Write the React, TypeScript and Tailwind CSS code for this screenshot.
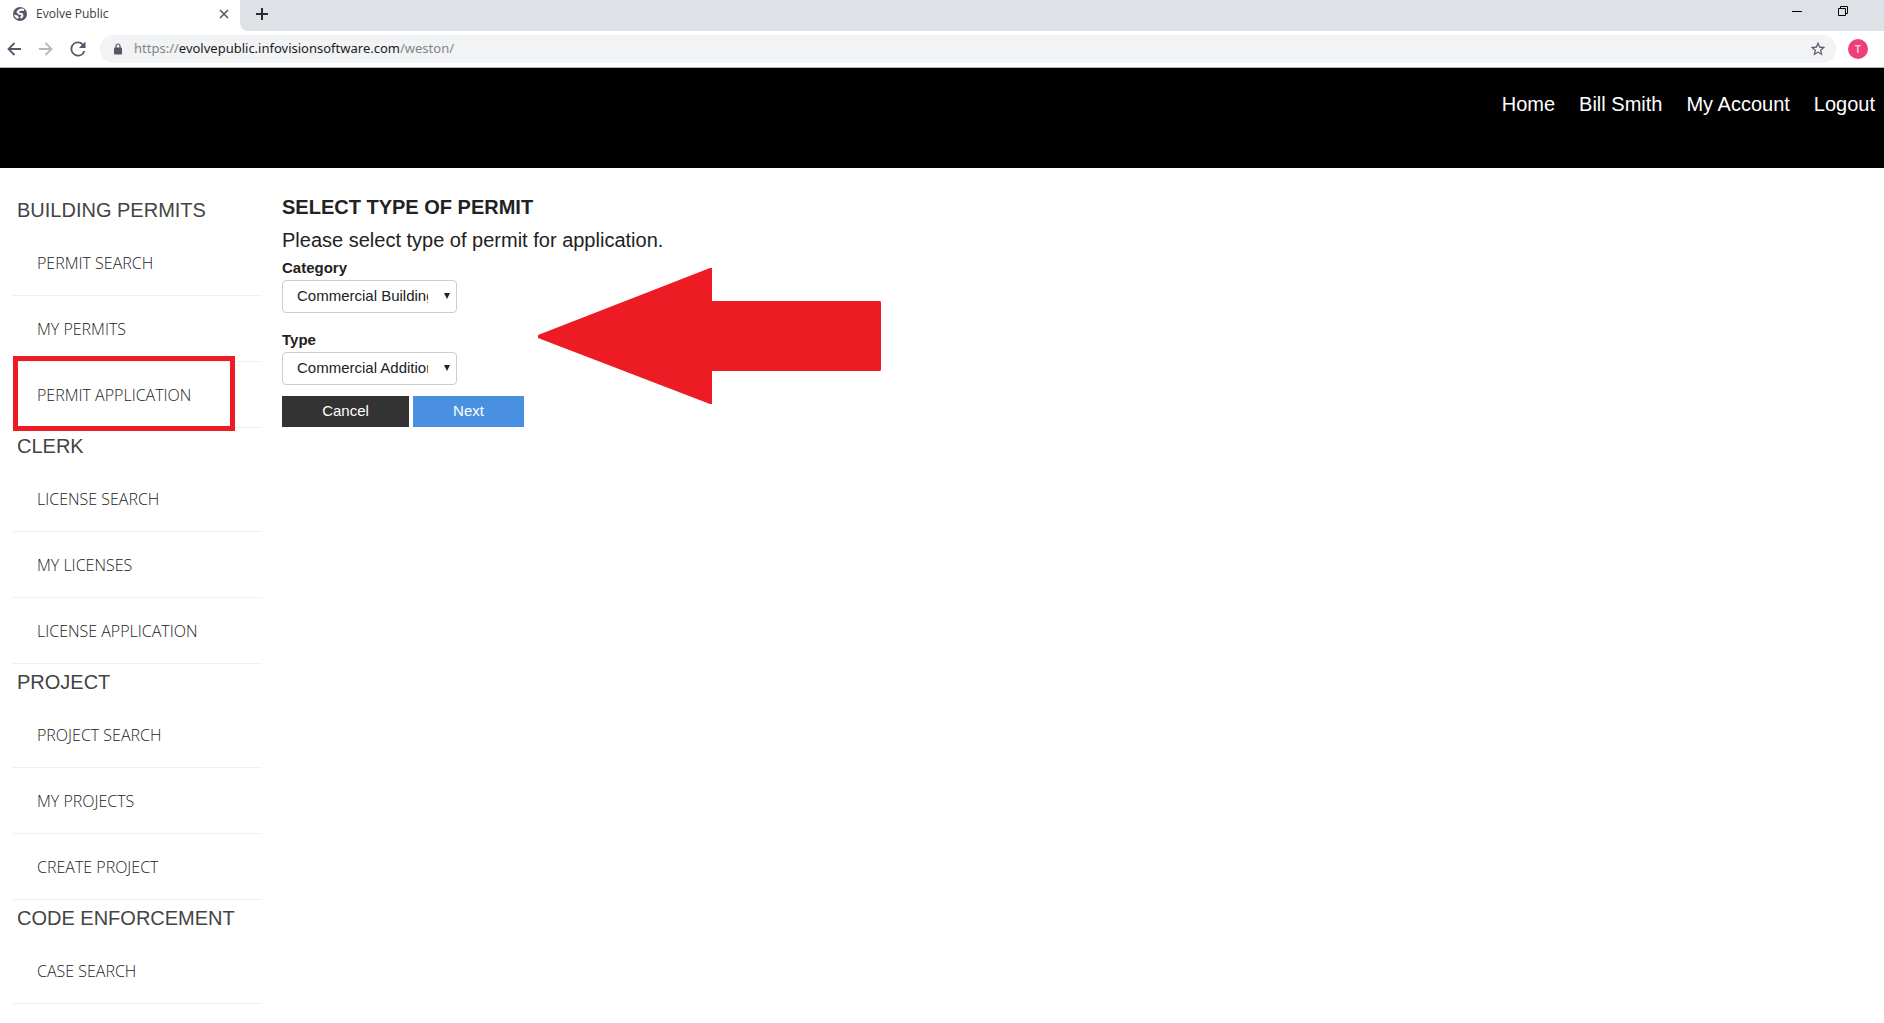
import { useState } from 'react'

type NavItem = { label: string; highlighted?: boolean }

const MENU: { title: string; items: NavItem[] }[] = [
  {
    title: 'BUILDING PERMITS',
    items: [
      { label: 'PERMIT SEARCH' },
      { label: 'MY PERMITS' },
      { label: 'PERMIT APPLICATION', highlighted: true },
    ],
  },
  {
    title: 'CLERK',
    items: [{ label: 'LICENSE SEARCH' }, { label: 'MY LICENSES' }, { label: 'LICENSE APPLICATION' }],
  },
  {
    title: 'PROJECT',
    items: [{ label: 'PROJECT SEARCH' }, { label: 'MY PROJECTS' }, { label: 'CREATE PROJECT' }],
  },
  {
    title: 'CODE ENFORCEMENT',
    items: [{ label: 'CASE SEARCH' }],
  },
]

const ACCOUNT_LINKS = ['Home', 'Bill Smith', 'My Account', 'Logout']

export default function App() {
  return (
    <div className="h-screen flex flex-col overflow-hidden bg-white font-['Liberation_Sans',Arial,sans-serif] text-[#222]">
      <TabStrip />
      <Toolbar />
      <header className="h-[100px] shrink-0 bg-black px-[9px] pt-6">
        <nav className="flex justify-end gap-6 text-xl leading-6 text-white">
          {ACCOUNT_LINKS.map((label) => (
            <a key={label} href="#">
              {label}
            </a>
          ))}
        </nav>
      </header>
      <div className="flex flex-1 min-h-0">
        <Sidebar />
        <PermitForm />
      </div>
    </div>
  )
}

function TabStrip() {
  return (
    <div className="flex h-[31px] shrink-0 bg-white font-['Open_Sans',sans-serif]">
      <div className="flex w-60 items-center pl-3 pr-2.5 pb-1">
        <svg width="16" height="16" viewBox="0 0 16 16" fill="none" className="mr-2">
          <circle cx="8" cy="8" r="7" fill="#5a5468" />
          <path
            d="M12 4L9.500 3.500 7 4.500 5.500 6 7 7.500 10 8.200 10.500 10 8.500 12"
            stroke="#fff"
            strokeWidth="2"
            strokeLinejoin="round"
          />
          <path d="M2 8.500l3.500 1 1.500 2-1.500 1.500A6 6 0 0 1 2 8.500z" fill="#fff" />
        </svg>
        <span className="flex-1 text-xs text-[#3c4043]">Evolve Public</span>
        <button aria-label="Close tab">
          <svg width="12" height="12" viewBox="0 0 12 12" stroke="#5a5468" strokeWidth="1.6">
            <path d="M2 2l8 8M10 2l-8 8" />
          </svg>
        </button>
      </div>
      <div className="flex flex-1 rounded-bl-lg bg-[#dee1e6]">
        <button aria-label="New tab" className="ml-4 mb-[3px]">
          <svg width="12" height="12" viewBox="0 0 12 12" stroke="#2b2b30" strokeWidth="2">
            <path d="M6 0v12M0 6h12" />
          </svg>
        </button>
        <div className="ml-auto flex items-center gap-9 pr-9 pb-[9px]">
          <button aria-label="Minimize">
            <svg width="10" height="10" viewBox="0 0 10 10" stroke="#000">
              <path d="M0 5.5h10" />
            </svg>
          </button>
          <button aria-label="Restore">
            <svg width="10" height="10" viewBox="0 0 10 10" fill="none" stroke="#000">
              <path d="M.5 2.500h7v7h-7zM2.500 2.500v-2h7v7h-2" />
            </svg>
          </button>
        </div>
      </div>
    </div>
  )
}

function Toolbar() {
  return (
    <div className="flex h-[37px] shrink-0 items-center border-b border-[#b5b5b7] bg-white pl-[7px] pr-4 font-['Noto_Sans',sans-serif]">
      <button aria-label="Back" className="mr-[18px]">
        <svg width="14" height="14" viewBox="0 0 14 14" fill="none" stroke="#5a5468" strokeWidth="1.8">
          <path d="M14 7H1.500M7.500 1L1.500 7l6 6" />
        </svg>
      </button>
      <button aria-label="Forward" className="mr-[17px]">
        <svg width="14" height="14" viewBox="0 0 14 14" fill="none" stroke="#b8b8ba" strokeWidth="1.8">
          <path d="M0 7h12.500M6.500 1l6 6-6 6" />
        </svg>
      </button>
      <button aria-label="Reload" className="mr-3.5">
        <svg width="16" height="16" viewBox="3.500 3.500 17 17" fill="#5a5468">
          <path d="M17.650 6.350A7.958 7.958 0 0 0 12 4a8 8 0 1 0 7.730 10h-2.080A6 6 0 1 1 12 6c1.660 0 3.140.69 4.220 1.780L13 11h7V4l-2.350 2.350z" />
        </svg>
      </button>
      <div className="flex h-7 flex-1 items-center rounded-full bg-[#f1f3f4] pl-3.5 pr-2.5">
        <svg width="8" height="12" viewBox="0 0 8 12" className="mr-3">
          <path d="M2 5V3a2 2 0 0 1 4 0v2" fill="none" stroke="#5a5468" strokeWidth="1.200" />
          <rect y="4.500" width="8" height="7" rx="1" fill="#5a5468" />
        </svg>
        <div className="flex-1 text-[13px] text-[#80868b]">
          https://<span className="text-[#202124]">evolvepublic.infovisionsoftware.com</span>/weston/
        </div>
        <button aria-label="Bookmark">
          <svg width="16" height="16" viewBox="1 1 22 22" fill="#5a5468">
            <path d="M22 9.240l-7.190-.62L12 2 9.190 8.630 2 9.240l5.460 4.730L5.820 21 12 17.270 18.180 21l-1.630-7.030L22 9.240zM12 15.400l-3.760 2.270 1-4.280-3.320-2.880 4.380-.38L12 6.100l1.710 4.040 4.380.38-3.320 2.880 1 4.280L12 15.400z" />
          </svg>
        </button>
      </div>
      <button className="ml-3 size-5 rounded-full bg-[#ef3f7a] text-[11px] leading-5 font-semibold text-[#f9c9d8]">
        T
      </button>
    </div>
  )
}

function Sidebar() {
  return (
    <aside className="w-[250px] shrink-0 ml-3 pt-6 text-[#444]">
      {MENU.map((group) => (
        <section key={group.title}>
          <h2 className="h-[38px] pl-[5px] text-xl leading-9">{group.title}</h2>
          <ul>
            {group.items.map((item) => (
              <li key={item.label} className="relative h-[66px] border-b border-[#f0f0f0]">
                <a
                  href="#"
                  className="block pl-[25px] font-['Open_Sans',sans-serif] text-base leading-[66px] font-light text-[#222]"
                >
                  {item.label}
                </a>
                {item.highlighted && (
                  <div className="pointer-events-none absolute -top-1.5 -bottom-1 left-px w-[222px] border-5 border-[#ed1c24]" />
                )}
              </li>
            ))}
          </ul>
        </section>
      ))}
    </aside>
  )
}

function PermitForm() {
  const [category, setCategory] = useState('Commercial Building')
  const [type, setType] = useState('Commercial Addition')

  return (
    <main className="relative flex-1 pl-5 pt-6">
      <h1 className="h-8 text-xl leading-[30px] font-bold">SELECT TYPE OF PERMIT</h1>
      <p className="text-xl leading-8">Please select type of permit for application.</p>
      <SelectField
        id="category"
        label="Category"
        value={category}
        options={['Commercial Building', 'Residential Building']}
        onChange={setCategory}
      />
      <div className="mt-[15px]">
        <SelectField
          id="type"
          label="Type"
          value={type}
          options={['Commercial Addition', 'Commercial Alteration']}
          onChange={setType}
        />
      </div>
      <div className="mt-[11px] flex gap-1 text-[15px] text-white">
        <button className="h-[31px] w-[127px] bg-[#333]">Cancel</button>
        <button className="h-[31px] w-[111px] bg-[#4a90e2]">Next</button>
      </div>

      {/* Arrow pointing at the two drop-downs */}
      <svg
        className="pointer-events-none absolute left-[276px] top-[100px]"
        width="343"
        height="136"
        viewBox="0 0 343 136"
        fill="#ed1c24"
      >
        <path d="M0 67L172 0h2v33h168l1 1v68l-1 1H174v33h-2L0 70z" />
      </svg>
    </main>
  )
}

function SelectField({
  id,
  label,
  value,
  options,
  onChange,
}: {
  id: string
  label: string
  value: string
  options: string[]
  onChange: (value: string) => void
}) {
  return (
    <div className="w-[175px] text-[15px]">
      <label htmlFor={id} className="block h-6 leading-6 font-bold">
        {label}
      </label>
      <div className="relative">
        <select
          id={id}
          value={value}
          onChange={(e) => onChange(e.target.value)}
          className="block h-[33px] w-full appearance-none rounded border border-[#ccc] bg-white pl-3.5 pr-7"
        >
          {options.map((option) => (
            <option key={option}>{option}</option>
          ))}
        </select>
        <svg
          className="pointer-events-none absolute right-[7px] top-[13px]"
          width="6"
          height="6"
          viewBox="0 0 6 6"
          fill="#222"
        >
          <path d="M0 0h6L3 6z" />
        </svg>
      </div>
    </div>
  )
}
